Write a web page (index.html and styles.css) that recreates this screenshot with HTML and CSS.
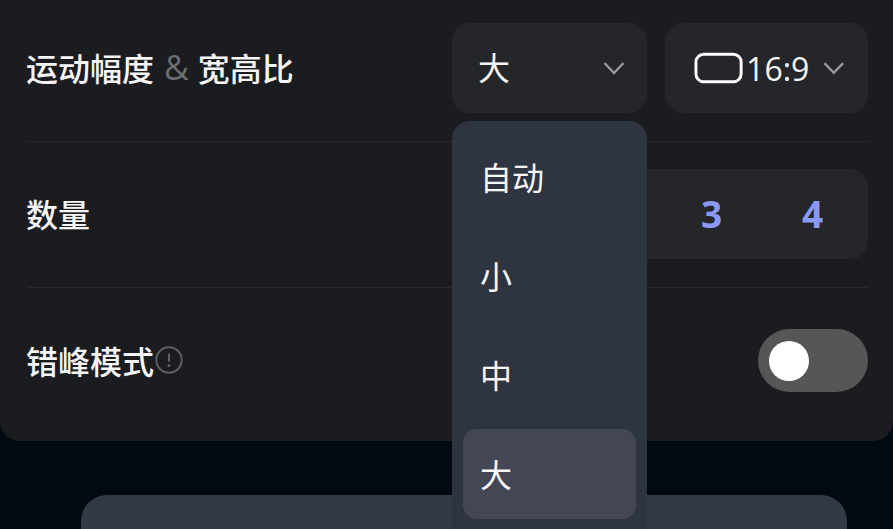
FILE: index.html
```html
<!DOCTYPE html>
<html lang="zh-CN">
<head>
    <meta charset="UTF-8">
    <meta name="viewport" content="width=device-width, initial-scale=1.0">
    <title>运动幅度设置</title>
    <link rel="stylesheet" href="styles.css">
</head>
<body>
    <div class="panel">
        <!-- Motion and ratio -->
        <div class="row row-first">
            <div class="row-label">运动幅度<span class="amp">&amp;</span>宽高比</div>
            <div class="row-controls">
                <div class="select select-motion">
                    <span class="select-text">大</span>
                    <svg class="chevron" viewBox="0 0 22 14"><path d="M1.5 2 L11 12 L20.5 2"/></svg>
                </div>
                <div class="select select-ratio">
                    <svg class="ratio-icon" viewBox="0 0 50 32"><rect x="2" y="2" width="46" height="28" rx="8"/></svg>
                    <span class="ratio-text">16:9</span>
                    <svg class="chevron" viewBox="0 0 22 14"><path d="M1.5 2 L11 12 L20.5 2"/></svg>
                </div>
            </div>
        </div>

        <!-- Count, first two cells sit behind the dropdown -->
        <div class="row">
            <div class="row-label">数量</div>
            <div class="segments">
                <span class="segment"></span>
                <span class="segment"></span>
                <span class="segment">3</span>
                <span class="segment">4</span>
            </div>
        </div>

        <!-- Off-peak mode -->
        <div class="row row-last">
            <div class="row-label">错峰模式<svg class="info-icon" viewBox="0 0 28 28"><circle cx="14" cy="14" r="12.7"/><path d="M14 7.5 V15.5"/><circle class="info-dot" cx="14" cy="19.5" r="1.5"/></svg></div>
            <div class="toggle"><span class="toggle-knob"></span></div>
        </div>

        <!-- Open dropdown -->
        <div class="dropdown">
            <div class="dropdown-item">自动</div>
            <div class="dropdown-item">小</div>
            <div class="dropdown-item">中</div>
            <div class="dropdown-item active">大</div>
        </div>
    </div>

    <div class="bottom-card"></div>
</body>
</html>
```

FILE: styles.css
```css
body {
    font-family: "Noto Sans CJK SC", "Noto Sans", sans-serif;
    margin: 0;
    height: 529px;
    overflow: hidden;
    background-color: #010911;
    color: #f5f5f5;
}
.panel {
    position: relative;
    height: 441px;
    box-sizing: border-box;
    padding: 23px 25px 0 28px;
    background-color: #1b1c20;
    border-radius: 0 0 20px 20px;
}
.row {
    display: flex;
    justify-content: space-between;
    align-items: center;
    height: 90px;
    padding: 0 0 28px;
    margin-bottom: 27px;
    border-bottom: 1px solid #28292d;
}
.row-last {
    height: 145px;
    padding: 0;
    margin: -27px 0 0;
    border-bottom: none;
}
.row-label {
    display: flex;
    align-items: center;
    margin-left: -2px;
    padding-bottom: 2px;
    font-size: 32px;
    font-weight: 500;
    line-height: 40px;
    white-space: pre;
}
.amp {
    margin: 0 9px 0 10px;
    font-family: "Open Sans", sans-serif;
    font-size: 34px;
    font-weight: 400;
    color: #6d6e71;
}
.row-controls {
    display: flex;
    gap: 18px;
}
.select {
    display: flex;
    align-items: center;
    box-sizing: border-box;
    height: 90px;
    background-color: #25262a;
    border-radius: 18px;
    font-size: 32px;
}
.select-motion {
    justify-content: space-between;
    width: 195px;
    padding: 0 22px 0 26px;
}
.select-text {
    padding-bottom: 4px;
}
.select-ratio {
    width: 203px;
    padding: 0 23px 0 29px;
}
.chevron {
    width: 22px;
    height: 14px;
    fill: none;
    stroke: #98999b;
    stroke-width: 2.4;
}
.ratio-icon {
    width: 50px;
    height: 32px;
    fill: none;
    stroke: #ffffff;
    stroke-width: 3;
}
.ratio-text {
    margin: 0 14px 0 3px;
    font-family: "Open Sans", sans-serif;
    font-size: 32px;
}
.segments {
    display: flex;
    box-sizing: border-box;
    width: 416px;
    height: 90px;
    padding: 0 5px 0 7px;
    background-color: #25262a;
    border-radius: 18px;
}
.segment {
    flex: 1;
    text-align: center;
    font-family: "Open Sans", sans-serif;
    font-size: 37px;
    font-weight: 700;
    line-height: 90px;
    color: #8b98f6;
}
.info-icon {
    width: 28px;
    height: 28px;
    margin: 1px 0 0 1px;
    fill: none;
    stroke: #5e5f62;
    stroke-width: 2;
}
.info-dot {
    fill: #5e5f62;
    stroke: none;
}
.toggle {
    display: flex;
    align-items: center;
    box-sizing: border-box;
    width: 110px;
    height: 63px;
    padding-left: 11px;
    background-color: #565657;
    border-radius: 32px;
}
.toggle-knob {
    width: 40px;
    height: 40px;
    background-color: #ffffff;
    border-radius: 50%;
}
/* Dropdown hangs over the rows and the card below */
.dropdown {
    position: absolute;
    z-index: 2;
    top: 121px;
    left: 452px;
    box-sizing: border-box;
    width: 195px;
    height: 420px;
    padding: 11px;
    background-color: #2f3441;
    border-radius: 18px;
}
.dropdown-item {
    box-sizing: border-box;
    height: 90px;
    margin-bottom: 9px;
    padding: 0 0 2px 17px;
    font-size: 32px;
    line-height: 88px;
    border-radius: 14px;
}
.dropdown-item.active {
    background-color: #434654;
}
.bottom-card {
    height: 60px;
    margin: 54px 46px 0 81px;
    background-color: #343a45;
    border-radius: 26px 26px 0 0;
}
```
